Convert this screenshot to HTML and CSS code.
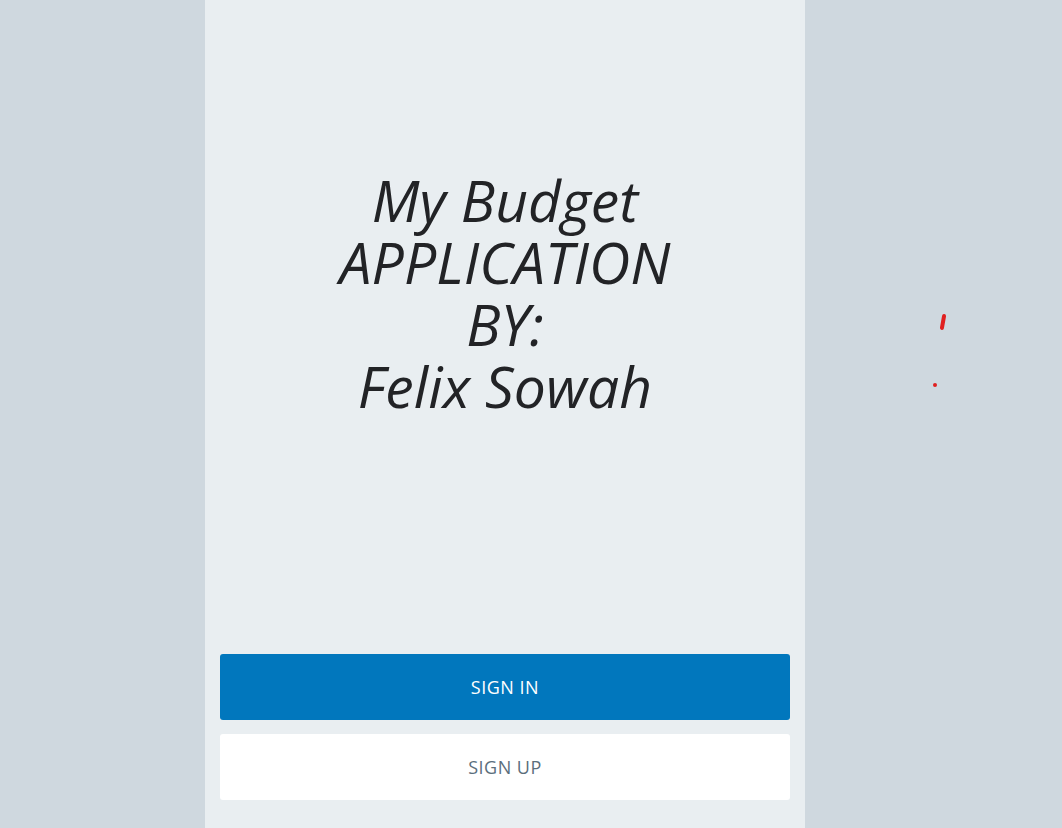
FILE: index.html
```html
<!DOCTYPE html>
<html>
<head>
<meta charset="utf-8">
<link rel="stylesheet" href="styles.css">
</head>
<body>
<div class="page">
  <main class="panel">
    <div class="hero">
      <h1 class="title">My Budget<br>APPLICATION<br>BY:<br>Felix Sowah</h1>
    </div>
    <div class="actions">
      <button class="btn btn-primary">SIGN IN</button>
      <button class="btn btn-secondary">SIGN UP</button>
    </div>
  </main>
  <span class="mark mark-line"></span>
  <span class="mark mark-dot"></span>
</div>
</body>
</html>
```

FILE: styles.css
```css
html, body {
  margin: 0;
  padding: 0;
  height: 100%;
}
body {
  background: #cfd8df;
  font-family: "Open Sans", "Noto Sans", sans-serif;
}
.page {
  position: relative;
  height: 828px;
  display: flex;
  justify-content: flex-start;
  padding-left: 205px;
}
.panel {
  width: 600px;
  height: 100%;
  background: #e9eef1;
  display: flex;
  flex-direction: column;
  box-sizing: border-box;
  padding: 0 15px 28px;
}
.hero {
  flex: 1;
  display: flex;
  align-items: center;
  justify-content: center;
  padding-bottom: 68px;
}
.title {
  margin: 0;
  font-family: "Open Sans", sans-serif;
  font-style: italic;
  font-weight: 400;
  font-size: 57px;
  line-height: 62px;
  color: #222326;
  text-align: center;
  letter-spacing: 0.1px;
}
.actions {
  display: flex;
  flex-direction: column;
  gap: 14px;
}
.btn {
  height: 66px;
  border: none;
  border-radius: 3px;
  font-family: "Open Sans", sans-serif;
  font-size: 18px;
  letter-spacing: 0.5px;
  cursor: pointer;
}
.btn-primary {
  background: #0177bd;
  color: #ffffff;
}
.btn-secondary {
  background: #ffffff;
  color: #5b6e7c;
}
.mark {
  position: absolute;
  background: #e02020;
}
.mark-line {
  left: 941px;
  top: 314px;
  width: 4px;
  height: 16px;
  border-radius: 2px;
  transform: rotate(10deg);
}
.mark-dot {
  left: 933px;
  top: 383px;
  width: 4px;
  height: 4px;
  border-radius: 50%;
}
```
